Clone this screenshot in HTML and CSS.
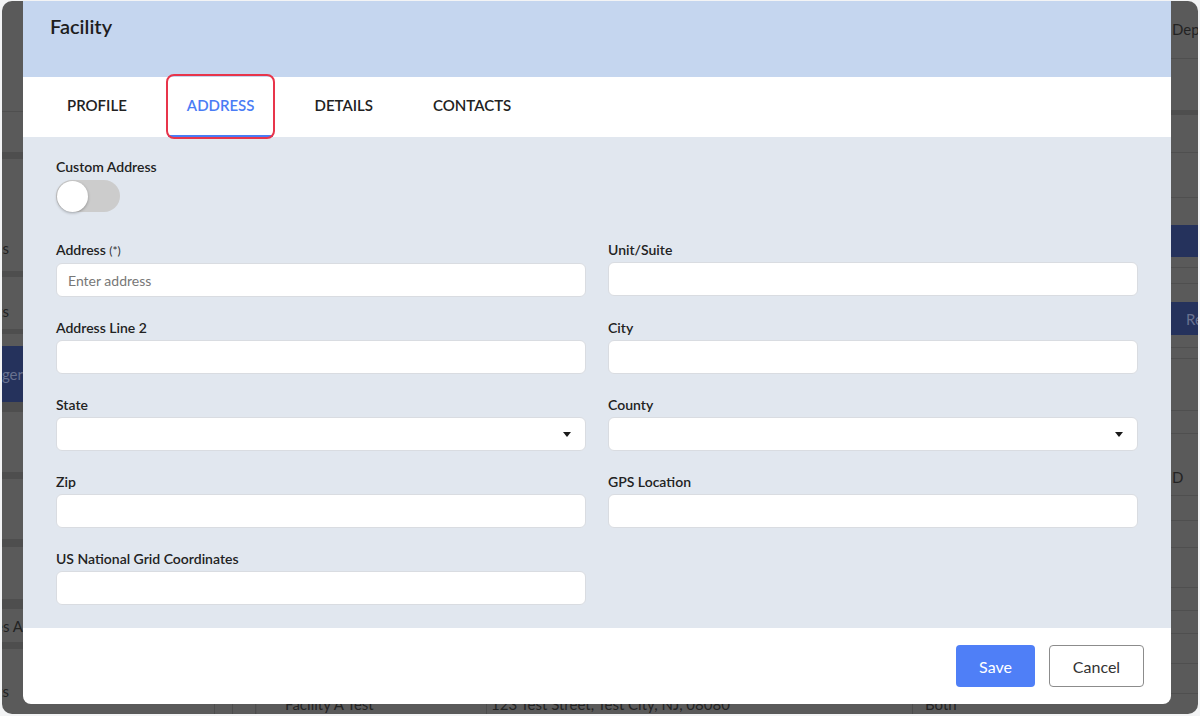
FILE: index.html
```html
<!DOCTYPE html>
<html lang="en">
<head>
  <meta charset="UTF-8">
  <title>Facility</title>
  <meta name="viewport" content="width=device-width, initial-scale=1.0">
  <link rel="stylesheet" href="styles.css">
</head>
<body>

<div class="screen">

  <!-- Page behind the dialog (dimmed) -->
  <div class="page">
    <div class="left-strip">
      <div class="cell"></div>
      <div class="line"></div>
      <div class="cell"></div>
      <div class="band"></div>
      <div class="cell low"><span>Facilities</span></div>
      <div class="band"></div>
      <div class="cell mid"><span>Contacts</span></div>
      <div class="band"></div>
      <div class="cell"></div>
      <div class="cell nav"><span>Manager</span></div>
      <div class="band"></div>
      <div class="cell"></div>
      <div class="band"></div>
      <div class="cell"></div>
      <div class="band"></div>
      <div class="cell"></div>
      <div class="band"></div>
      <div class="cell wide"><span>Resources A</span></div>
      <div class="band"></div>
      <div class="cell low"><span>Reports</span></div>
    </div>

    <div class="main">
      <div class="trow">
        <div class="tcell"></div>
        <div class="tcell"></div>
        <div class="tcell"></div>
        <div class="tcell"></div>
        <div class="tcell name">Facility A Test</div>
        <div class="tcell addr">123 Test Street, Test City, NJ, 08080</div>
        <div class="tcell both">Both</div>
      </div>
    </div>

    <div class="right-strip">
      <div class="cell head"><span>Department</span></div>
      <div class="line"></div>
      <div class="cell"></div>
      <div class="band"></div>
      <div class="cell"></div>
      <div class="line"></div>
      <div class="cell"></div>
      <div class="line"></div>
      <div class="cell"></div>
      <div class="cell nav"></div>
      <div class="cell"></div>
      <div class="line"></div>
      <div class="cell"></div>
      <div class="line"></div>
      <div class="cell"></div>
      <div class="cell nav btn-text"><span>Reset</span></div>
      <div class="cell"></div>
      <div class="line"></div>
      <div class="cell"></div>
      <div class="line"></div>
      <div class="cell"></div>
      <div class="line"></div>
      <div class="cell"></div>
      <div class="line"></div>
      <div class="cell low"><span>D</span></div>
      <div class="line"></div>
      <div class="cell"></div>
      <div class="line"></div>
      <div class="cell"></div>
      <div class="line"></div>
      <div class="cell"></div>
      <div class="line"></div>
      <div class="cell"></div>
      <div class="line"></div>
      <div class="cell"></div>
      <div class="line"></div>
      <div class="cell"></div>
      <div class="line"></div>
      <div class="cell"></div>
      <div class="line"></div>
      <div class="cell"></div>
    </div>
  </div>

  <!-- Facility dialog -->
  <div class="modal">
    <div class="modal-header">
      <h2>Facility</h2>
    </div>

    <div class="tabs">
      <div class="tab">PROFILE</div>
      <div class="tab active">ADDRESS<span class="mark"></span></div>
      <div class="tab">DETAILS</div>
      <div class="tab">CONTACTS</div>
    </div>

    <div class="modal-body">
      <div class="custom">
        <label>Custom Address</label>
        <div class="toggle"><span class="knob"></span></div>
      </div>

      <div class="form-grid">
        <div class="field">
          <label>Address <small>(*)</small></label>
          <input type="text" placeholder="Enter address">
        </div>
        <div class="field">
          <label>Unit/Suite</label>
          <input type="text">
        </div>
        <div class="field">
          <label>Address Line 2</label>
          <input type="text">
        </div>
        <div class="field">
          <label>City</label>
          <input type="text">
        </div>
        <div class="field">
          <label>State</label>
          <div class="select"><span class="caret"></span></div>
        </div>
        <div class="field">
          <label>County</label>
          <div class="select"><span class="caret"></span></div>
        </div>
        <div class="field">
          <label>Zip</label>
          <input type="text">
        </div>
        <div class="field">
          <label>GPS Location</label>
          <input type="text">
        </div>
        <div class="field">
          <label>US National Grid Coordinates</label>
          <input type="text">
        </div>
      </div>
    </div>

    <div class="modal-footer">
      <button class="btn save">Save</button>
      <button class="btn cancel">Cancel</button>
    </div>
  </div>

</div>

</body>
</html>
```

FILE: styles.css
```css
* { margin: 0; padding: 0; box-sizing: border-box; }
html, body {
  width: 100%;
  height: 100%;
  font-family: Lato, "Open Sans", Arial, sans-serif;
  background: #f3f4f5;
  overflow: hidden;
}
.screen {
  position: relative;
  margin: 1px 2px 0 2px;
  height: 713px;
  border-radius: 10px;
  overflow: hidden;
  background: #5a5a5a;
}

/* dimmed page behind the dialog */
.page {
  display: flex;
  height: 100%;
  font-size: 15px;
  color: #232323;
}
.left-strip, .right-strip {
  display: grid;
  height: 100%;
  overflow: hidden;
}
.left-strip {
  width: 21px;
  grid-template-rows: 110px 1px 40px 7px 112px 6px 52px 5px 12px 56px 10px 60px 7px 60px 8px 52px 10px 33px 7px 1fr;
}
.right-strip {
  width: 27px;
  margin-left: auto;
  grid-template-rows: 57px 1px 51px 5px 37px 1px 44px 1px 27px 32px 10px 1px 15px 1px 18px 33px 12px 1px 10px 1px 51px 1px 22px 1px 61px 1px 24px 1px 26px 1px 39px 1px 22px 1px 22px 1px 29px 1px 29px 1px 1fr;
}
.cell {
  display: flex;
  align-items: center;
  white-space: nowrap;
  overflow: hidden;
}
.left-strip .cell { justify-content: flex-end; padding-right: 14px; }
.left-strip .cell.nav, .left-strip .cell.wide { padding-right: 0; }
.left-strip .cell.low { align-items: flex-end; padding-bottom: 14px; }
.left-strip .cell.mid { align-items: flex-end; padding-bottom: 9px; }
.right-strip .cell { justify-content: flex-start; padding-left: 1px; }
.right-strip .cell.head { align-items: flex-start; padding-top: 19px; }
.right-strip .cell.low { align-items: flex-end; padding-bottom: 9px; }
.right-strip .cell.btn-text { padding-left: 15px; }
.cell.nav {
  background: #25325c;
  color: #68718f;
}
.band { background: #4e4e4e; }
.line { background: #4f4f4f; }
.main {
  flex: 1;
  display: flex;
  flex-direction: column;
  justify-content: flex-end;
}
.trow {
  display: flex;
  height: 24px;
  border-top: 1px solid #4c4c4c;
  white-space: nowrap;
}
.tcell {
  border-right: 1px solid #4c4c4c;
  padding-top: 4px;
}
.tcell:nth-child(1) { width: 192px; }
.tcell:nth-child(2) { width: 18px; }
.tcell:nth-child(3) { width: 23px; }
.tcell:nth-child(4) { width: 0; border-right-color: #555; }
.tcell.name { width: 230px; padding-left: 28px; }
.tcell.addr { width: 426px; padding-left: 4px; }
.tcell.both { border-right: none; padding-left: 12px; }

/* dialog */
.modal {
  position: absolute;
  top: 0;
  left: 21px;
  width: 1148px;
  height: 703px;
  display: flex;
  flex-direction: column;
  background: #fff;
  border-radius: 0 0 8px 8px;
  overflow: hidden;
}
.modal-header {
  height: 76px;
  background: #c5d6ef;
  padding: 14px 27px;
}
.modal-header h2 {
  font-size: 20px;
  line-height: 22px;
  font-weight: 600;
  color: #1d1d1d;
}
.tabs {
  display: flex;
  height: 60px;
  padding-left: 25px;
  background: #fff;
}
.tab {
  position: relative;
  padding: 0 19px;
  margin-right: 22px;
  line-height: 57px;
  font-size: 15px;
  font-weight: 600;
  color: #222;
  border-bottom: 2px solid transparent;
}
.tab.active {
  color: #4a7cf5;
  border-bottom-color: #4a7cf5;
}
.tab .mark {
  position: absolute;
  top: -3px;
  bottom: -4px;
  left: -2px;
  right: -2px;
  border: 2px solid #e8354b;
  border-radius: 8px;
}
.modal-body {
  flex: 1;
  background: #e1e7ef;
  padding: 21px 33px 0 33px;
}
label {
  display: block;
  font-size: 14px;
  line-height: 18px;
  font-weight: 600;
  color: #222;
  margin-bottom: 3px;
}
label small {
  font-size: 12px;
  font-weight: 400;
  color: #333;
}
.custom {
  margin-bottom: 29px;
}
.custom label { margin-bottom: 4px; }
.toggle {
  width: 64px;
  height: 32px;
  border-radius: 16px;
  background: #cccccc;
  padding: 1px;
}
.knob {
  display: block;
  width: 31px;
  height: 31px;
  border-radius: 50%;
  background: #fff;
  box-shadow: 0 1px 3px rgba(0,0,0,0.3);
}
.form-grid {
  display: grid;
  grid-template-columns: 1fr 1fr;
  column-gap: 22px;
  row-gap: 22px;
}
.field input, .field .select {
  display: block;
  width: 100%;
  height: 34px;
  border: 1px solid #d9dce1;
  border-radius: 6px;
  background: #fff;
  padding: 0 11px;
  font-family: inherit;
  font-size: 14px;
  color: #222;
  outline: none;
}
.field input::placeholder { color: #777; }
.field .select {
  display: flex;
  align-items: center;
  justify-content: flex-end;
  padding-right: 14px;
}
.caret {
  width: 0;
  height: 0;
  border-left: 4px solid transparent;
  border-right: 4px solid transparent;
  border-top: 5px solid #1a1a1a;
}
.modal-footer {
  height: 76px;
  display: flex;
  justify-content: flex-end;
  align-items: center;
  gap: 14px;
  padding: 0 27px 0 0;
}
.btn {
  height: 42px;
  font-family: inherit;
  font-size: 16px;
  border-radius: 4px;
}
.save {
  width: 79px;
  background: #4f7ff7;
  color: #fff;
  border: none;
}
.cancel {
  width: 95px;
  background: #fff;
  color: #333;
  border: 1px solid #8c8c8c;
}
```
